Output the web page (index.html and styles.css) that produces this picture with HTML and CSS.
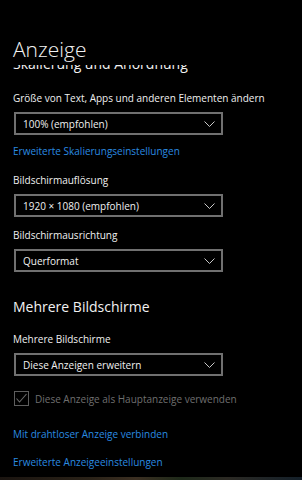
FILE: index.html
```html
<!DOCTYPE html>
<html>
<head>
<meta name="viewport" content="width=device-width, initial-scale=1">
<link rel="stylesheet" href="styles.css">
<title>Anzeige</title>
</head>
<body>

<div class="window">
    <div class="header">
        <h1 class="page_title">Anzeige</h1>
    </div>

    <div class="content">
        <!-- section heading scrolled under the header -->
        <div class="clipped">
            <h2 class="section_title">Skalierung und Anordnung</h2>
        </div>

        <div class="label_class first">Größe von Text, Apps und anderen Elementen ändern</div>
        <div class="dropdown">
            <span>100% (empfohlen)</span>
            <svg class="chevron" width="11" height="6" viewBox="0 0 11 6"><path d="M0.5 0.5 L5.5 5.5 L10.5 0.5" fill="none" stroke="#c8c8c8" stroke-width="1"/></svg>
        </div>
        <a class="link link_scale" href="#">Erweiterte Skalierungseinstellungen</a>

        <div class="label_class res">Bildschirmauflösung</div>
        <div class="dropdown">
            <span>1920 × 1080 (empfohlen)</span>
            <svg class="chevron" width="11" height="6" viewBox="0 0 11 6"><path d="M0.5 0.5 L5.5 5.5 L10.5 0.5" fill="none" stroke="#c8c8c8" stroke-width="1"/></svg>
        </div>

        <div class="label_class orient">Bildschirmausrichtung</div>
        <div class="dropdown">
            <span>Querformat</span>
            <svg class="chevron" width="11" height="6" viewBox="0 0 11 6"><path d="M0.5 0.5 L5.5 5.5 L10.5 0.5" fill="none" stroke="#c8c8c8" stroke-width="1"/></svg>
        </div>

        <h2 class="section_title multi">Mehrere Bildschirme</h2>

        <div class="label_class multi_label">Mehrere Bildschirme</div>
        <div class="dropdown">
            <span>Diese Anzeigen erweitern</span>
            <svg class="chevron" width="11" height="6" viewBox="0 0 11 6"><path d="M0.5 0.5 L5.5 5.5 L10.5 0.5" fill="none" stroke="#c8c8c8" stroke-width="1"/></svg>
        </div>

        <div class="checkbox_row">
            <div class="checkbox">
                <svg width="13" height="13" viewBox="0 0 13 13"><path d="M1.5 6.5 L4.5 10 L11.5 2" fill="none" stroke="#6a6a6a" stroke-width="1.1"/></svg>
            </div>
            <span>Diese Anzeige als Hauptanzeige verwenden</span>
        </div>

        <a class="link link_wireless" href="#">Mit drahtloser Anzeige verbinden</a>
        <a class="link link_advanced" href="#">Erweiterte Anzeigeeinstellungen</a>
    </div>

    <div class="wallpaper"></div>
</div>

</body>
</html>
```

FILE: styles.css
```css
body {
    margin: 0;
    background-color: #000000;
    font-family: "Open Sans", "Noto Sans", sans-serif;
    color: #ffffff;
}

.window {
    width: 302px;
    height: 480px;
    display: flex;
    flex-direction: column;
    overflow: hidden;
}

.header {
    padding: 35px 0 0 13px;
    height: 30px;
}

.page_title {
    margin: 0;
    font-size: 21px;
    font-weight: 300;
    line-height: 28px;
    color: #f2f2f2;
}

.content {
    flex: 1;
    padding-left: 13px;
    display: flex;
    flex-direction: column;
    align-items: flex-start;
}

.clipped {
    height: 9px;
    overflow: hidden;
    display: flex;
    align-items: flex-end;
}

.section_title {
    margin: 0;
    font-size: 14px;
    font-weight: 400;
    line-height: 20px;
    color: #f2f2f2;
    flex: none;
}

.label_class {
    font-size: 10px;
    line-height: 14px;
    color: #f0f0f0;
}

.first {
    margin-top: 17px;
}

.res {
    margin-top: 15px;
}

.orient {
    margin-top: 11px;
}

.multi {
    margin-top: 25px;
}

.multi_label {
    margin-top: 15px;
}

.dropdown {
    margin-top: 7px;
    margin-left: 1px;
    box-sizing: border-box;
    width: 209px;
    height: 23px;
    border: 2px solid #707070;
    display: flex;
    align-items: center;
    justify-content: space-between;
    padding: 0 0 0 7px;
    font-size: 10px;
    color: #f0f0f0;
}

.chevron {
    margin-right: 6px;
}

.link {
    font-size: 10px;
    line-height: 14px;
    color: #2a8be0;
    text-decoration: none;
}

.link_scale {
    margin-top: 9px;
}

.checkbox_row {
    margin-top: 15px;
    margin-left: 1px;
    display: flex;
    align-items: center;
    gap: 6px;
    font-size: 10px;
    color: #6f6f6f;
}

.checkbox {
    width: 15px;
    height: 15px;
    box-sizing: border-box;
    border: 1.5px solid #5e5e5e;
    display: flex;
    align-items: center;
    justify-content: center;
}

.checkbox svg {
    flex: none;
}

.link_wireless {
    margin-top: 21px;
}

.link_advanced {
    margin-top: 14px;
}

.wallpaper {
    margin-top: auto;
    height: 3px;
    background-image: linear-gradient(to right, #1a1410, #2a2218 30%, #3b2f22 45%, #1e2a1a 60%, #2c2a24 75%, #14202a);
}
```
